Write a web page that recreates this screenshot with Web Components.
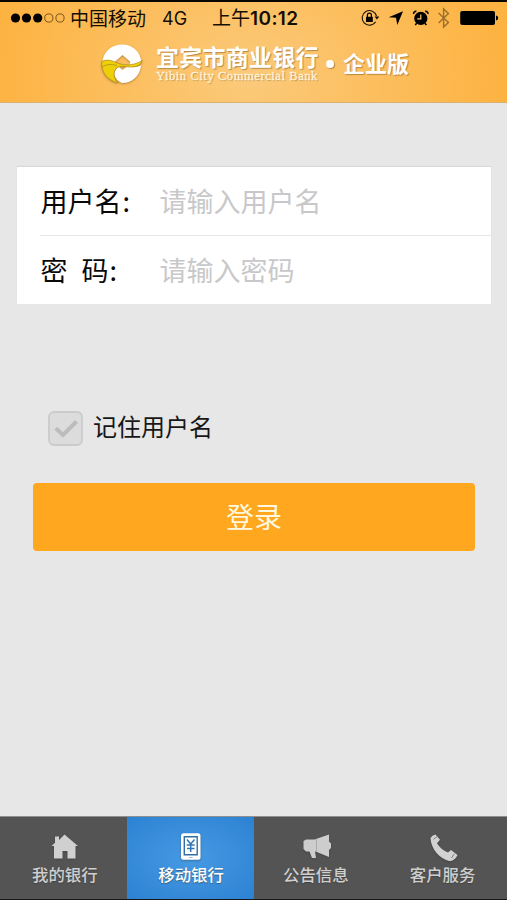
<!DOCTYPE html>
<html lang="zh-CN">
<head>
<meta charset="utf-8">
<title>企业版</title>
<style>
html,body{margin:0;height:100%}
body{font-family:"Noto Sans CJK SC",sans-serif;background:#e7e7e7;color:#111}
</style>
</head>
<body>
<bank-app></bank-app>
<script>
const define = (name, html, init) => customElements.define(name, class extends HTMLElement {
  constructor() {
    super();
    this.attachShadow({mode: 'open'}).innerHTML = html;
  }
  connectedCallback() { if (init) init.call(this, this.shadowRoot); }
});

define('status-bar', `
<style>
:host{display:flex;height:32px;align-items:center;color:#150e03;font-size:19px;line-height:31px;padding-left:10px;box-sizing:border-box;white-space:nowrap}
.net{font-family:Inter,sans-serif;font-size:18px;margin-left:17px;width:50px}
.carrier{margin-left:5px;width:75px}
.time{width:148px}
.carrier,.time{padding-bottom:1px}
b{font:600 19px/31px Inter,sans-serif;letter-spacing:.4px}
svg{display:block;flex:none}
</style>
<svg width="55" height="12" viewBox="0 0 55 12"><g fill="#000"><circle cx="5.5" cy="6" r="4.6"/><circle cx="16.5" cy="6" r="4.6"/><circle cx="27.7" cy="6" r="4.6"/></g><g fill="none" stroke="#6b4a1c" stroke-width=".9"><circle cx="38.8" cy="6" r="4.1"/><circle cx="50" cy="6" r="4.1"/></g></svg>
<span class="carrier">中国移动</span><span class="net">4G</span><span class="time">上午<b>10:12</b></span>
<svg width="140" height="24" viewBox="360 6 140 24">
 <path d="M375.600 21.800A7.300 7.300 0 1 1 376.500 16" fill="none" stroke="#1a1205" stroke-width="1.100"/>
 <path d="M374.600 16.500h4.600l-2.300 3z"/><rect x="366" y="16.800" width="6.800" height="5.300" rx=".6"/><path d="M367.400 17v-1.800a2 2 0 0 1 4 0V17" fill="none" stroke="#000" stroke-width="1.200"/>
 <path d="M403 11.200 397.300 25l-1.300-7.200-7.300-.6z"/>
 <circle cx="420.800" cy="18.400" r="6.600"/><path d="M413.700 14c-.4-1.600 1-3 2.700-2.600M427.900 14c.4-1.600-1-3-2.700-2.600M416.700 23.300l-1.500 1.700M424.900 23.300l1.500 1.700" fill="none" stroke="#000" stroke-width="1.600"/><path d="M420.800 14.500v4.300h-3.600" fill="none" stroke="#ffc66d" stroke-width="1.200"/>
 <path d="m438.600 13 9.800 9.400-4.800 4.600V9l4.800 4.600-9.800 9.400" fill="none" stroke="#98702e" stroke-width="1.400"/>
 <rect x="460.200" y="11" width="34.800" height="14" rx="2"/><path d="M496 15.500q2.200.4 2.200 2.500t-2.200 2.500z"/>
</svg>`);

define('brand-title', `
<style>
:host{display:flex;color:#fff;padding:8px 0 0 100px;white-space:nowrap;text-shadow:1px 1px 1px #8b653199}
svg{display:block;flex:none;margin-top:1px;filter:drop-shadow(0 1px .8px #9a6a2caa)}
.name{width:174px;margin-left:13px}
.cn{font-weight:700;font-size:23px;line-height:26px;letter-spacing:.25px;height:26px;margin-top:1px}
.en{font:400 12.500px/12px "Liberation Serif",serif;letter-spacing:.58px;margin-top:1px;color:#fff1da;-webkit-text-stroke:.3px #fff1da}
.dot{width:8px;height:8px;border-radius:50%;background:#fff;margin:18px 0 0 -4px;box-shadow:1px 1px 1px #8b653199;flex:none}
.edition{font-weight:700;font-size:22px;line-height:28px;margin:6px 0 0 9px}
</style>
<svg width="43" height="42" viewBox="0 0 43 42">
 <path fill="#fff" fill-rule="evenodd" d="M22 1.500C33 1.500 40.500 9 41.300 19Q35 24 28 23.500L30.500 19 22.500 12 14 19.500Q8 16 2.500 18C4 8 12 1.500 22 1.500z"/>
 <path fill="#fff" d="M41 22.500C40 34 31 40 22 40 12 35 13 27 19 24L22.500 27 27 23.500Q35 25 41 22.500z"/>
 <path fill="#edcf0a" stroke="#a88422" stroke-width=".6" d="M1.800 18.500Q8 15.500 15 19C24 23.500 34 22.500 42.300 17.500Q40 23.500 33 24C25 24.500 20 21.500 16 25.500 12 31 15 37 18 40 8 37 2.500 31 1.800 22z"/>
 <path fill="none" stroke="#a88422" stroke-width=".7" d="M2 24Q8 20 17 22.500"/>
</svg>
<div class="name"><div class="cn">宜宾市商业银行</div><div class="en">Yibin City Commercial Bank</div></div>
<span class="dot"></span><span class="edition">企业版</span>`);

define('field-row', `
<style>
:host{display:flex;align-items:center;height:66px;padding-bottom:2px;margin-left:23px;font-size:27px;white-space:pre}
:host([divided]){border-bottom:1px solid #e7e7e7}
label{width:119.500px;padding-left:.5px;box-sizing:border-box;color:#090909}
.hint{color:#c8c8ca}
</style>
<label><slot name="label"></slot></label><span class="hint"><slot></slot></span>`);

define('login-card', `
<style>:host{display:block;height:137px;margin:64px 16px 0 17px;background:#fff;box-shadow:0 -1px 1px #d8d8d8}</style><slot></slot>`);

define('check-option', `
<style>
:host{display:flex;align-items:center;margin:107px 0 0 48px;height:35px;font-size:24px;line-height:30px;color:#171717}
svg{margin-right:10px}span{padding-bottom:6px}
</style>
<svg width="35" height="35" viewBox="0 0 35 35"><rect x="1" y="1" width="33" height="33" rx="5" fill="#dcdcdc" stroke="#cbcbcb" stroke-width="1.800"/><path d="m7.800 17.300 7.200 6.700L28.500 10.500" fill="none" stroke="#bcbcbc" stroke-width="4"/></svg><span><slot></slot></span>`);

define('login-button', `
<style>
:host{display:block;margin:37px 32px 0 33px}
button{display:flex;align-items:center;justify-content:center;width:100%;height:68px;border:0;border-radius:4px;background:#ffa71f;color:#fff8df;font:400 28px/1 "Noto Sans CJK SC",sans-serif;padding:0 0 3px}
</style><button><slot></slot></button>`);

define('tab-item', `
<style>
:host{display:flex;flex-direction:column;align-items:center;flex:none;width:25%;color:#cfcfcf;font-size:16.400px;font-weight:500;line-height:24px;text-shadow:0 1px 1px #3338;padding:14px 0 0 3px;box-sizing:border-box}
:host([active]){color:#fff;background:radial-gradient(ellipse at 50% 50%,#4799e2,#2c82d3);padding-left:2px}
:host([icon=news]),:host([icon=phone]){padding-left:0;padding-right:2px}
svg{width:32px;height:32px;display:block;filter:drop-shadow(0 1px 1px #3336)}
.text{margin-top:-1px}
</style><svg viewBox="0 0 32 32"></svg><div class="text"><slot></slot></div>`, function (root) {
  const icons = {
    home: '<path fill="#d0d0d0" d="M2.500 15 6 11.800V5.500h4v3.500L15.500 3.500 29 15h-2.500v12.500H18.500v-7.500h-5v7.500H5V15z"/>',
    mobile: '<rect x="6" y="2.200" width="19.500" height="26.500" rx="2.500" fill="#fff"/><path d="M9.300 5.800h12.900v18H9.300z" fill="#fff" stroke="#326da5" stroke-width="1.400"/><path d="m12 8.500 3.700 4.500L19.500 8.500M11.700 14h8M12 17.500h7.500M15.700 13.500v7.500" fill="none" stroke="#3376b5" stroke-width="1.500"/><path d="M14 26.500h3.500" stroke="#9fc1df"/>',
    news: '<path fill="#cdcdcd" d="M3.500 10 6 8.500h8.500L29 3.500v7l2 2v4.500l-2 2V26L15.500 20.500h-.5l1 6.500h-4L9.500 20.500H6L3.500 18z"/><path d="M16.500 8v12.500" stroke="#aaa"/>',
    phone: '<path fill="#d2d2d2" d="M3.500 7Q5 4 8.500 3.500L13 8.700 10 12.300Q13.500 18.500 21 21.500l3-2.500 6.500 5C28.500 28.500 25 30.500 22 30 13 27.500 4 18.500 3.500 7z"/><path d="m6.500 8.300 4.500-3.500M24.500 27l2.800-4.200" stroke="#777" stroke-width=".9"/>'
  };
  root.querySelector('svg').innerHTML = icons[this.getAttribute('icon')];
});

define('tab-strip', `
<style>:host{display:flex;height:84px;background:#545454;border-top:1px solid #8f8f8f;border-bottom:1px solid #171717;box-sizing:border-box;margin-top:auto;flex:none}</style><slot></slot>`);

define('bank-app', `
<style>
:host{display:flex;flex-direction:column;height:900px;overflow:hidden}
header{height:103px;box-sizing:border-box;border-top:2px solid #090600;border-bottom:1px solid #dcb06e;background:radial-gradient(ellipse 255px 190px at 49% 75%,#fbca7b,#fdb342);flex:none}
</style>
<header><status-bar></status-bar><brand-title></brand-title></header>
<login-card>
 <field-row divided><span slot="label">用户名<span style="margin-left:1px">:</span></span>请输入用户名</field-row>
 <field-row><span slot="label">密  <span style="margin-left:2px">码<span style="margin-left:1px">:</span></span></span>请输入密码</field-row>
</login-card>
<check-option>记住用户名</check-option>
<login-button>登录</login-button>
<tab-strip>
 <tab-item icon="home">我的银行</tab-item><tab-item icon="mobile" active>移动银行</tab-item><tab-item icon="news">公告信息</tab-item><tab-item icon="phone">客户服务</tab-item>
</tab-strip>`);
</script>
</body>
</html>
